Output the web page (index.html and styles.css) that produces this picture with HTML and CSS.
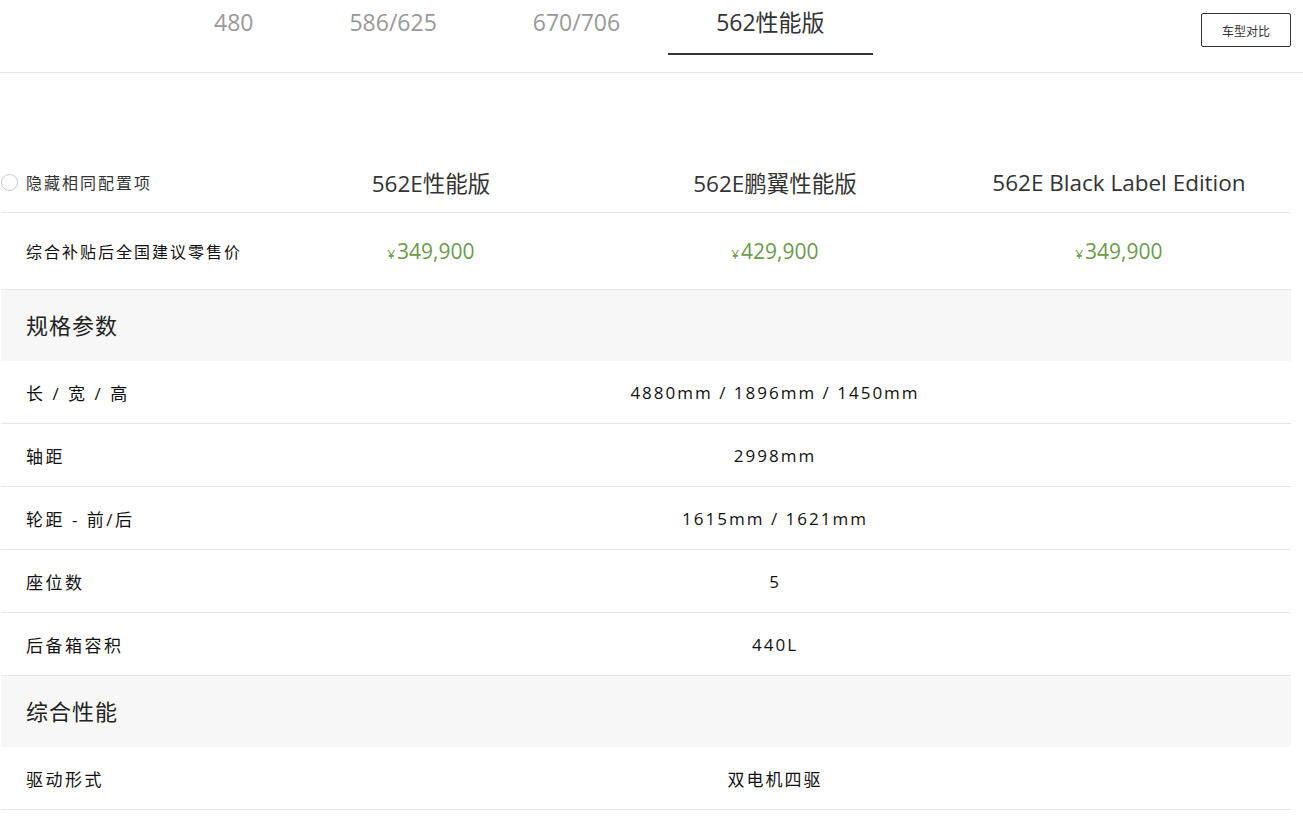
FILE: index.html
```html
<!DOCTYPE html>
<html lang="zh-CN">
<head>
<meta charset="utf-8">
<title>车型对比</title>
<link rel="stylesheet" href="styles.css">
</head>
<body>
<header class="topbar">
  <nav class="tabs">
    <a class="tab">480</a>
    <a class="tab">586/625</a>
    <a class="tab">670/706</a>
    <a class="tab active">562性能版</a>
  </nav>
  <button class="compare-btn">车型对比</button>
</header>

<main class="spec">
  <div class="grid head-row">
    <label class="hide-same"><span class="radio"></span>隐藏相同配置项</label>
    <div class="model">562E性能版</div>
    <div class="model">562E鹏翼性能版</div>
    <div class="model">562E Black Label Edition</div>
  </div>
  <div class="grid price-row">
    <div class="label price-label">综合补贴后全国建议零售价</div>
    <div class="price"><span class="yen">¥</span>349,900</div>
    <div class="price"><span class="yen">¥</span>429,900</div>
    <div class="price"><span class="yen">¥</span>349,900</div>
  </div>

  <div class="section">规格参数</div>
  <div class="grid row"><div class="label">长 / 宽 / 高</div><div class="value">4880mm / 1896mm / 1450mm</div></div>
  <div class="grid row"><div class="label">轴距</div><div class="value">2998mm</div></div>
  <div class="grid row"><div class="label">轮距 - 前/后</div><div class="value">1615mm / 1621mm</div></div>
  <div class="grid row"><div class="label">座位数</div><div class="value">5</div></div>
  <div class="grid row"><div class="label">后备箱容积</div><div class="value">440L</div></div>

  <div class="section">综合性能</div>
  <div class="grid row"><div class="label">驱动形式</div><div class="value">双电机四驱</div></div>
</main>
</body>
</html>
```

FILE: styles.css
```css
* { box-sizing: border-box; }
html, body { margin: 0; padding: 0; background: #fff; }
body {
  font-family: "Open Sans", "Noto Sans CJK SC", sans-serif;
  color: #222;
}

.topbar {
  display: flex;
  align-items: flex-start;
  height: 73px;
  border-bottom: 1px solid #e6e6e6;
}
.tabs {
  display: flex;
  margin-left: 166px;
}
.tab {
  display: block;
  padding: 0 48px 8px;
  line-height: 45px;
  font-size: 23px;
  color: #999;
  border-bottom: 2px solid transparent;
  cursor: pointer;
}
.tab.active {
  color: #333;
  border-bottom-color: #333;
}
.compare-btn {
  margin-left: auto;
  margin-right: 12px;
  margin-top: 13px;
  width: 90px;
  height: 34px;
  background: #fff;
  border: 1px solid #333;
  border-radius: 2px;
  font-family: "Noto Sans CJK SC", sans-serif;
  font-size: 12px;
  color: #333;
  padding: 0;
}

.spec {
  margin: 79px 12px 0 1px;
  width: 1290px;
}
.grid {
  display: grid;
  grid-template-columns: 258px repeat(3, 344px);
  align-items: center;
  border-bottom: 1px solid #e6e6e6;
}
.head-row { height: 61px; }
.price-row { height: 77px; }
.row { height: 63px; }

.hide-same {
  display: flex;
  align-items: center;
  font-size: 16px;
  letter-spacing: 2px;
  color: #333;
}
.radio {
  width: 17px;
  height: 17px;
  border: 1px solid #c8c8c8;
  border-radius: 50%;
  margin-right: 8px;
  flex: none;
}
.model {
  text-align: center;
  font-size: 22.5px;
  color: #333;
}
.label {
  padding-left: 25px;
  font-size: 17px;
  letter-spacing: 2.5px;
  color: #111;
}
.price-label {
  font-size: 16px;
  letter-spacing: 2px;
}
.price {
  text-align: center;
  font-size: 21px;
  color: #6b9a4d;
}
.yen {
  font-size: 13px;
  margin-right: 2px;
}
.value {
  grid-column: 2 / 5;
  text-align: center;
  font-size: 17px;
  letter-spacing: 2px;
  color: #111;
}
.section {
  height: 71px;
  line-height: 71px;
  background: #f7f7f7;
  padding-left: 25px;
  font-size: 22px;
  color: #222;
  letter-spacing: 1px;
}
```
